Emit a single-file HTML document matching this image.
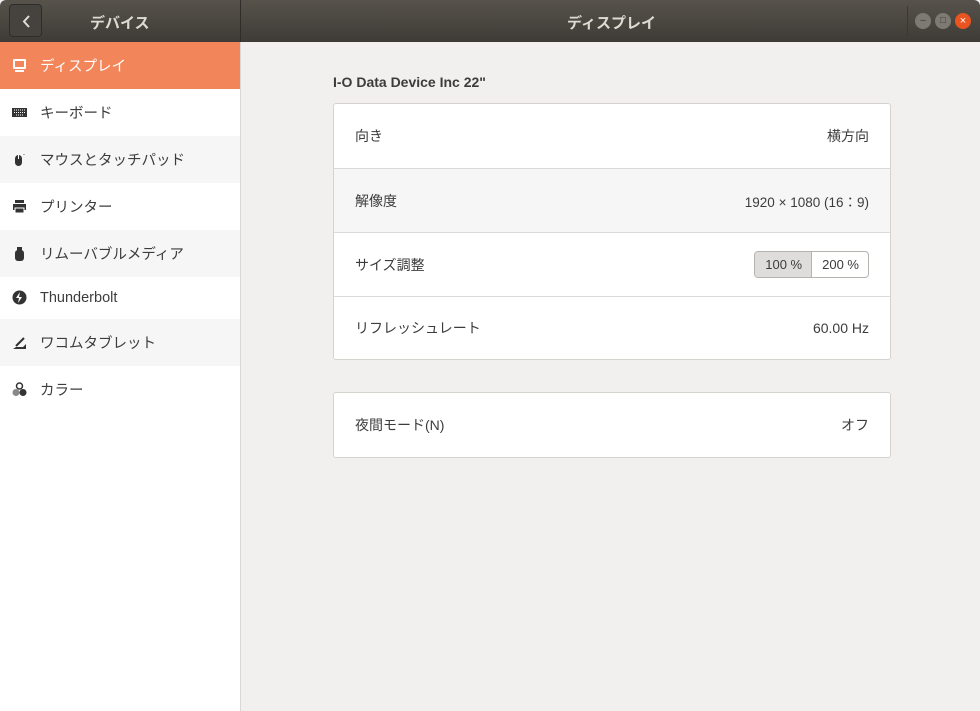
<!DOCTYPE html>
<html><head><meta charset="utf-8"><style>
*{box-sizing:border-box;margin:0;padding:0}
body{width:980px;height:711px;overflow:hidden;background:#f1f0ef;font-family:"Liberation Sans","Noto Sans CJK JP",sans-serif;font-size:14px;color:#3c3c3c;position:relative}
.hdr{position:absolute;left:0;top:0;width:980px;height:42px;background:linear-gradient(#57534b,#3e3b37);border-radius:6px 6px 0 0}
.hdr .t{position:absolute;color:#dfdbd2;font-weight:bold;font-size:15px;top:12px}
.back{position:absolute;left:9px;top:4px;width:33px;height:33px;border:1px solid #2e2c29;border-radius:4px;background:#46433e}
.sep{position:absolute;left:240px;top:0;width:1px;height:42px;background:#2f2d2a}
.side{position:absolute;left:0;top:42px;width:241px;height:669px;background:#fff;border-right:1px solid #dad8d5}
.it{height:47px;display:flex;align-items:center;padding-left:40px;font-size:14.5px;position:relative}
.it.g{background:#f6f6f6}
.it.sel{background:#f3855a;color:#fff}
.ic{position:absolute;left:12px;top:16px;width:15px;height:15px}
.card{position:absolute;left:333px;width:558px;background:#fff;border:1px solid #d6d3cf;border-radius:3px}
.row{height:64px;display:flex;justify-content:space-between;align-items:center;padding:0 21px;border-top:1px solid #dcdad7;font-size:14px}
.row:first-child{border-top:none}
.row.g{background:#f6f6f6}
.seg{display:flex;border:1px solid #b6b3ae;border-radius:4px;overflow:hidden;font-size:13px}
.seg span{padding:5px 9px 5px 10px}
.seg .a{background:#dedddb;border-right:1px solid #b6b3ae}
.wb{position:absolute;top:13px;width:16px;height:16px;border-radius:50%;background:#7d7a74;color:#3e3b37;font-size:10px;text-align:center;line-height:16px}
</style></head><body>
<div class="hdr">
<div class="back"><svg width="33" height="33"><path d="M19 11l-5 5.5 5 5.5" stroke="#e0ddd6" stroke-width="2" fill="none"/></svg></div>
<div class="t" style="left:90px">デバイス</div>
<div class="sep"></div>
<div class="t" style="left:567px">ディスプレイ</div>
<div style="position:absolute;left:907px;top:6px;width:1px;height:30px;background:#3a3835"></div>
<div class="wb" style="left:915px">–</div>
<div class="wb" style="left:935px">□</div>
<div class="wb" style="left:955px;background:#e95420;color:#fff;font-size:11px">×</div>
</div>
<div class="side">
<div class="it sel"><svg class="ic" viewBox="0 0 15 15"><rect x="1" y="1" width="13" height="10" rx="1" fill="#fff"/><rect x="3" y="3" width="9" height="6" fill="#f3855a"/><rect x="3" y="12" width="9" height="2" fill="#fff"/></svg>ディスプレイ</div>
<div class="it"><svg class="ic" viewBox="0 0 15 15"><rect x="0" y="3" width="15" height="9" fill="#333"/><path d="M2 5h11M2 7.5h11M4 10h7" stroke="#fff" stroke-dasharray="1 1"/></svg>キーボード</div>
<div class="it g"><svg class="ic" viewBox="0 0 15 15"><rect x="3" y="3" width="7" height="11" rx="3.5" fill="#333"/><path d="M6.5 3v4M10 3q2-2 4 0" stroke="#fff"/></svg>マウスとタッチパッド</div>
<div class="it"><svg class="ic" viewBox="0 0 15 15"><rect x="3" y="1" width="9" height="3" fill="#333"/><rect x="1" y="5" width="13" height="6" fill="#333"/><rect x="3" y="9" width="9" height="5" fill="#333" stroke="#fff"/></svg>プリンター</div>
<div class="it g"><svg class="ic" viewBox="0 0 15 15"><rect x="5" y="1" width="5" height="4" fill="#333"/><rect x="3" y="4" width="9" height="11" rx="3" fill="#333"/></svg>リムーバブルメディア</div>
<div class="it" style="height:42px"><svg class="ic" style="top:13px" viewBox="0 0 15 15"><circle cx="7.5" cy="7.5" r="7" fill="#333"/><path d="M8 2L4 8h3l-1 5 4-6H7z" fill="#fff"/></svg>Thunderbolt</div>
<div class="it g"><svg class="ic" viewBox="0 0 15 15"><path d="M1 14h13V9l-3 3H4z" fill="#333"/><path d="M4 11l8-8" stroke="#333" stroke-width="2"/></svg>ワコムタブレット</div>
<div class="it"><svg class="ic" viewBox="0 0 15 15"><circle cx="7.5" cy="4" r="3" fill="none" stroke="#333" stroke-width="1.5"/><circle cx="4" cy="10.5" r="3.5" fill="#888"/><circle cx="11" cy="10.5" r="3.5" fill="#333"/></svg>カラー</div>
</div>
<div style="position:absolute;left:333px;top:74px;font-weight:bold;font-size:14px;color:#3c3c3c">I-O Data Device Inc 22"</div>
<div class="card" style="top:103px">
<div class="row"><span>向き</span><span>横方向</span></div>
<div class="row g"><span>解像度</span><span style="font-size:13.5px">1920 × 1080 (16：9)</span></div>
<div class="row"><span>サイズ調整</span><div class="seg"><span class="a">100 %</span><span>200 %</span></div></div>
<div class="row" style="height:63px"><span>リフレッシュレート</span><span>60.00 Hz</span></div>
</div>
<div class="card" style="top:392px">
<div class="row"><span>夜間モード(N)</span><span>オフ</span></div>
</div>
</body></html>
